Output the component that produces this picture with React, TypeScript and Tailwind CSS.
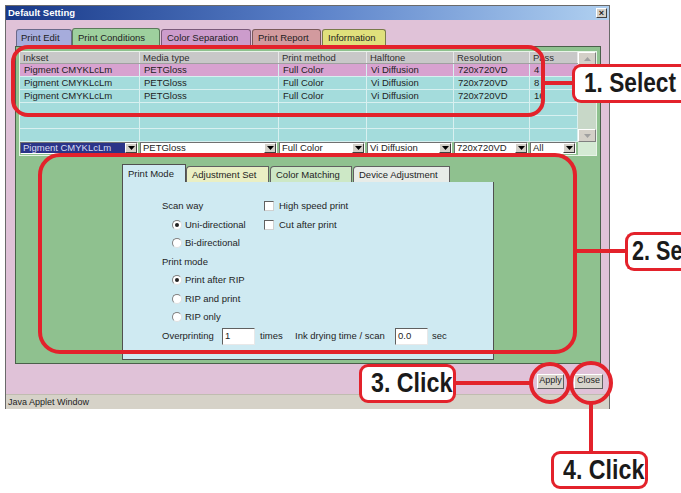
import React from 'react';

const rows = [
  { ink: 'Pigment CMYKLcLm', media: 'PETGloss', method: 'Full Color', half: 'Vi Diffusion', res: '720x720VD', pass: '4', pink: true },
  { ink: 'Pigment CMYKLcLm', media: 'PETGloss', method: 'Full Color', half: 'Vi Diffusion', res: '720x720VD', pass: '8', pink: false },
  { ink: 'Pigment CMYKLcLm', media: 'PETGloss', method: 'Full Color', half: 'Vi Diffusion', res: '720x720VD', pass: '16', pink: false },
  { ink: '', media: '', method: '', half: '', res: '', pass: '', pink: false },
  { ink: '', media: '', method: '', half: '', res: '', pass: '', pink: false },
  { ink: '', media: '', method: '', half: '', res: '', pass: '', pink: false },
];

const cols = 'grid grid-cols-[120px_139px_88px_87px_76px_48px]';

function Arrow({ disabled }: { disabled?: boolean }) {
  return (
    <div className="w-[12px] h-[10px] bg-[#d4d0c8] border border-t-white border-l-white border-r-[#404040] border-b-[#404040] flex items-center justify-center shrink-0">
      <svg width="7" height="4" viewBox="0 0 7 4">
        <path d="M0 0h7L3.5 4z" fill={disabled ? '#a0a0a0' : '#000'} />
      </svg>
    </div>
  );
}

function Combo({ text, selected, w }: { text: string; selected?: boolean; w: string }) {
  return (
    <div className={`${w} h-[12px] flex items-center border border-t-[#707070] border-l-[#707070] border-r-white border-b-white bg-white`}>
      <div
        className={`flex-1 self-stretch flex items-center pl-[2px] whitespace-nowrap overflow-x-hidden ${
          selected ? 'bg-[#2b3488] text-[#d8dcf4]' : 'text-[#222]'
        }`}
      >
        <span className="leading-[10px]">{text}</span>
      </div>
      <Arrow />
    </div>
  );
}

function Radio({ on }: { on?: boolean }) {
  return (
    <div className="w-[10px] h-[10px] rounded-full bg-white border border-t-[#808080] border-l-[#808080] border-r-[#e0e0e0] border-b-[#e0e0e0] flex items-center justify-center shrink-0">
      {on && <div className="w-[4px] h-[4px] rounded-full bg-[#222]" />}
    </div>
  );
}

function Check() {
  return <div className="w-[10px] h-[10px] bg-white border border-t-[#606060] border-l-[#606060] border-r-[#d0d0d0] border-b-[#d0d0d0] shrink-0" />;
}

function Field({ value }: { value: string }) {
  return (
    <div className="w-[33px] h-[17px] bg-white border border-t-[#606060] border-l-[#606060] border-r-[#e8e8e8] border-b-[#e8e8e8] pl-[2px] leading-[14px]">
      {value}
    </div>
  );
}

export default function App() {
  return (
    <div
      className="relative w-[681px] h-[493px] bg-white overflow-hidden text-[9.5px] text-[#1e1e1e]"
      style={{ fontFamily: '"Liberation Sans", Arial, sans-serif' }}
    >
      {/* window */}
      <div className="ml-[5px] mt-[5px] w-[605px] h-[404px] border border-[#6a6a6a] flex flex-col">
        <div className="h-[14px] bg-linear-to-r from-[#183888] via-[#5a80c8] to-[#b0d0f0] flex items-center justify-between pl-[2px] pr-[2px]">
          <span className="text-white font-bold text-[9.5px]">Default Setting</span>
          <div className="w-[11px] h-[10px] bg-[#d4d0c8] border border-t-white border-l-white border-r-[#404040] border-b-[#404040] flex items-center justify-center text-[9px] leading-none font-bold">
            ×
          </div>
        </div>

        <div className="flex-1 bg-[#e0c2d8] flex flex-col">
          {/* outer tabs */}
          <div className="flex items-end pl-[10px] pt-[8px] h-[26px] text-[9.5px]">
            <div className="w-[56px] h-[17px] bg-[#a6acdc] border border-b-0 border-[#6a6a8a] rounded-t-[3px] pl-[4px] leading-[16px]">Print Edit</div>
            <div className="w-[88px] h-[18px] bg-[#9ed09e] border border-b-0 border-[#5a7a5a] rounded-t-[3px] pl-[5px] leading-[17px]">Print Conditions</div>
            <div className="w-[90px] h-[17px] bg-[#cc9ccc] border border-b-0 border-[#7a5a7a] rounded-t-[3px] pl-[5px] leading-[16px] ml-[1px]">Color Separation</div>
            <div className="w-[69px] h-[17px] bg-[#d29a9e] border border-b-0 border-[#7a5a5a] rounded-t-[3px] pl-[5px] leading-[16px] ml-[1px]">Print Report</div>
            <div className="w-[64px] h-[17px] bg-[#e0e07c] border border-b-0 border-[#7a7a4a] rounded-t-[3px] pl-[5px] leading-[16px] ml-[1px]">Information</div>
          </div>

          {/* green panel */}
          <div className="ml-[9px] w-[586px] h-[318px] bg-[#8fc18f] border border-[#4a604a] px-[3px] pt-[4px]">
            <div className="border border-[#e8f4e8] bg-[#a4dcdc]">
              <div className="flex">
                <div className="w-[558px]">
                  <div className={`${cols} h-[12px] bg-[#c8c8c8] border-b border-[#a0a0a0]`}>
                    {['Inkset', 'Media type', 'Print method', 'Halftone', 'Resolution', 'Pass'].map((h) => (
                      <div key={h} className="pl-[3px] leading-[11px] border-r border-[#e8e8e8] text-[#303030]">
                        {h}
                      </div>
                    ))}
                  </div>
                  {rows.map((r, i) => (
                    <div
                      key={i}
                      className={`${cols} h-[13px] border-b border-[#d8f0f0] ${r.pink ? 'bg-[#d8a2d0]' : 'bg-[#a4dcdc]'}`}
                    >
                      {[r.ink, r.media, r.method, r.half, r.res, r.pass].map((c, j) => (
                        <div key={j} className="pl-[4px] leading-[12px] border-r border-[#d8f0f0] whitespace-nowrap overflow-hidden">
                          {c}
                        </div>
                      ))}
                    </div>
                  ))}
                </div>
                <div className="w-[18px] flex flex-col bg-[#c8d8c8]">
                  <div className="h-[13px] bg-[#d4d0c8] border border-t-white border-l-white border-r-[#808080] border-b-[#808080] flex items-center justify-center">
                    <svg width="7" height="4" viewBox="0 0 7 4">
                      <path d="M3.5 0L7 4H0z" fill="#a0a0a0" />
                    </svg>
                  </div>
                  <div className="flex-1" />
                  <div className="h-[13px] bg-[#d4d0c8] border border-t-white border-l-white border-r-[#808080] border-b-[#808080] flex items-center justify-center">
                    <svg width="7" height="4" viewBox="0 0 7 4">
                      <path d="M0 0h7L3.5 4z" fill="#a0a0a0" />
                    </svg>
                  </div>
                </div>
              </div>
              <div className="flex h-[13px] items-start bg-[#8fc18f]">
                <div className={`${cols} w-[558px] items-start`}>
                  <Combo text="Pigment CMYKLcLm" selected w="w-[118px]" />
                  <Combo text="PETGloss" w="w-[137px]" />
                  <Combo text="Full Color" w="w-[86px]" />
                  <Combo text="Vi Diffusion" w="w-[85px]" />
                  <Combo text="720x720VD" w="w-[74px]" />
                  <Combo text="All" w="w-[46px]" />
                </div>
                <div className="w-[18px] h-full bg-[#d4ead4]" />
              </div>
            </div>

            {/* inner tabs */}
            <div className="ml-[103px] mt-[8px] flex items-end h-[18px] text-[9.5px]">
              <div className="w-[64px] h-[18px] bg-[#cfeaf2] border border-b-0 border-[#505050] pl-[5px] leading-[17px]">Print Mode</div>
              <div className="w-[83px] h-[16px] bg-[#eaefc4] border border-b-0 border-[#606060] rounded-tl-[4px] pl-[5px] leading-[15px]">Adjustment Set</div>
              <div className="w-[82px] h-[16px] bg-[#cde8c6] border border-b-0 border-[#606060] rounded-tl-[4px] pl-[5px] leading-[15px] ml-[1px]">Color Matching</div>
              <div className="w-[97px] h-[16px] bg-[#e8ece8] border border-b-0 border-[#606060] rounded-tl-[4px] pl-[5px] leading-[15px] ml-[1px]">Device Adjustment</div>
            </div>
            <div className="ml-[103px] w-[372px] h-[178px] bg-[#cfeaf2] border border-t-0 border-[#505050] pl-[39px] pt-[15px] flex flex-col">
              <div className="flex items-center h-[18.5px]">
                <div className="w-[102px]">Scan way</div>
                <Check />
                <span className="ml-[5px]">High speed print</span>
              </div>
              <div className="flex items-center h-[18.5px]">
                <div className="w-[102px] flex items-center pl-[10px]">
                  <Radio on />
                  <span className="ml-[3px]">Uni-directional</span>
                </div>
                <Check />
                <span className="ml-[5px]">Cut after print</span>
              </div>
              <div className="flex items-center h-[18.5px] pl-[10px]">
                <Radio />
                <span className="ml-[3px]">Bi-directional</span>
              </div>
              <div className="flex items-center h-[18.5px]">Print mode</div>
              <div className="flex items-center h-[18.5px] pl-[10px]">
                <Radio on />
                <span className="ml-[3px]">Print after RIP</span>
              </div>
              <div className="flex items-center h-[18.5px] pl-[10px]">
                <Radio />
                <span className="ml-[3px]">RIP and print</span>
              </div>
              <div className="flex items-center h-[18.5px] pl-[10px]">
                <Radio />
                <span className="ml-[3px]">RIP only</span>
              </div>
              <div className="flex items-center h-[20px]">
                <div className="w-[60px]">Overprinting</div>
                <Field value="1" />
                <span className="ml-[5px] w-[35px]">times</span>
                <span className="w-[100px]">Ink drying time / scan</span>
                <Field value="0.0" />
                <span className="ml-[4px]">sec</span>
              </div>
            </div>
          </div>

          {/* buttons */}
          <div className="flex justify-end items-center gap-[10px] pr-[6px] pt-[4px] h-[30px] text-[9px]">
            <div className="w-[27px] h-[15px] bg-[#d8d4cc] border border-t-white border-l-white border-r-[#606060] border-b-[#606060] flex items-center justify-center">Apply</div>
            <div className="w-[29px] h-[15px] bg-[#d8d4cc] border border-t-white border-l-white border-r-[#606060] border-b-[#606060] flex items-center justify-center">Close</div>
          </div>
        </div>

        <div className="h-[15px] bg-[#d6d2c8] pl-[2px] leading-[15px] text-[9px] border-t border-[#c0bcb0]">Java Applet Window</div>
      </div>

      {/* annotations */}
      <svg className="absolute inset-0 pointer-events-none" width="681" height="493">
        <g fill="none" stroke="#e3222b" strokeWidth="4">
          <rect x="13" y="47" width="530" height="68" rx="15" />
          <line x1="543" y1="83" x2="573" y2="83" />
          <rect x="40" y="155" width="535" height="197" rx="20" />
          <line x1="575" y1="251" x2="626" y2="251" />
          <line x1="455" y1="383" x2="531" y2="383" />
          <circle cx="550" cy="383" r="19" />
          <circle cx="591" cy="383" r="20" />
          <line x1="591" y1="403" x2="591" y2="452" />
        </g>
      </svg>
      <div className="absolute left-[572px] top-[64px] w-[109px] h-[39px] bg-white border-[3px] border-r-0 border-[#e3222b] rounded-l-[9px] flex items-center pl-[9px] font-bold text-[27px] text-[#1a1a1a]">
        <span className="inline-block scale-x-[0.84] origin-left whitespace-nowrap">1. Select</span>
      </div>
      <div className="absolute left-[625px] top-[232px] w-[56px] h-[39px] bg-white border-[3px] border-r-0 border-[#e3222b] rounded-l-[9px] flex items-center pl-[4px] font-bold text-[27px] text-[#1a1a1a]">
        <span className="inline-block scale-x-[0.8] origin-left whitespace-nowrap">2. Se</span>
      </div>
      <div className="absolute left-[359px] top-[364px] w-[97px] h-[39px] bg-white border-[3px] border-[#e3222b] rounded-[9px] flex items-center pl-[9px] font-bold text-[27px] text-[#1a1a1a]">
        <span className="inline-block scale-x-[0.86] origin-left whitespace-nowrap">3. Click</span>
      </div>
      <div className="absolute left-[551px] top-[451px] w-[97px] h-[38px] bg-white border-[3px] border-[#e3222b] rounded-[9px] flex items-center pl-[9px] font-bold text-[27px] text-[#1a1a1a]">
        <span className="inline-block scale-x-[0.86] origin-left whitespace-nowrap">4. Click</span>
      </div>
    </div>
  );
}
